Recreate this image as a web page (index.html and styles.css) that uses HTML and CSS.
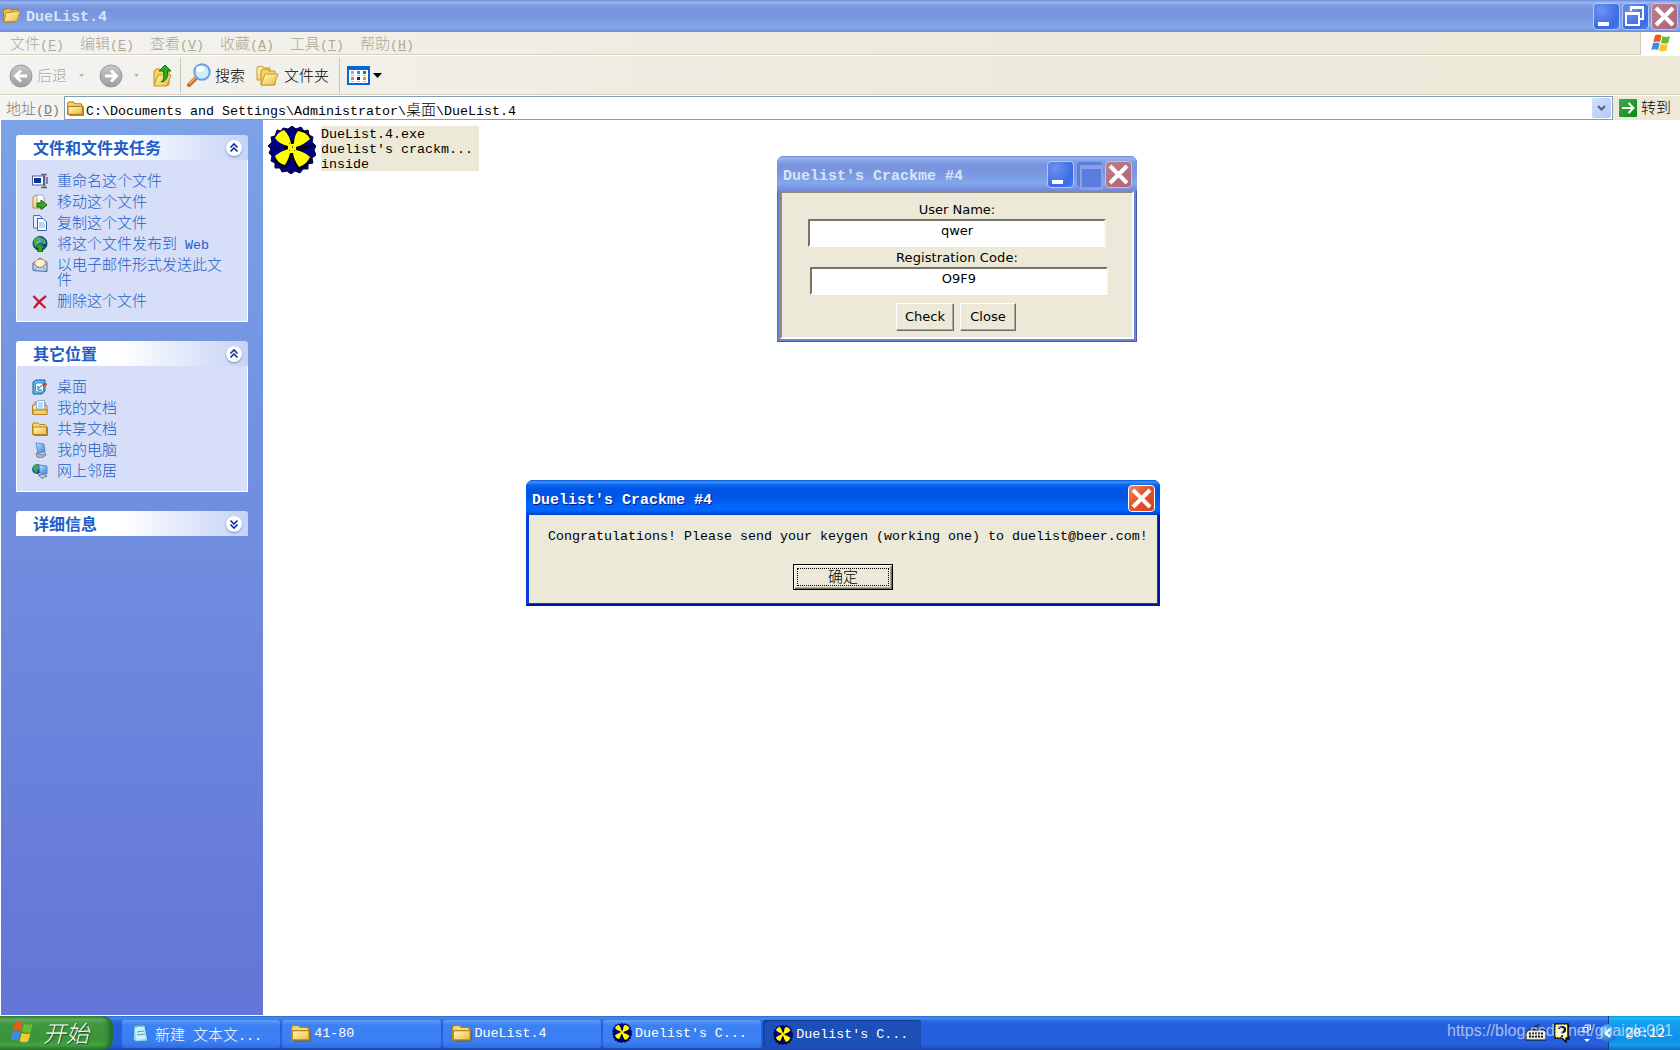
FILE: index.html
```html
<!DOCTYPE html>
<html lang="zh-CN">
<head>
  <meta charset="UTF-8">
  <title>DueList.4</title>
  <link rel="stylesheet" href="styles.css">
</head>
<body>
  <!-- shared icons -->
  <svg class="defs" width="0" height="0">
    <defs>
      <linearGradient id="gold" x1="0" y1="0" x2="1" y2="1"><stop offset="0" stop-color="#fffbc4"/><stop offset="1" stop-color="#eeb93c"/></linearGradient>
      <linearGradient id="grey" x1="0" y1="0" x2="0" y2="1"><stop offset="0" stop-color="#c8c8c8"/><stop offset="1" stop-color="#9c9c9c"/></linearGradient>
      <linearGradient id="screen" x1="0" y1="0" x2="1" y2="1"><stop offset="0" stop-color="#bfe6ff"/><stop offset="1" stop-color="#2b83e0"/></linearGradient>
      <radialGradient id="globe" cx=".35" cy=".3"><stop offset="0" stop-color="#8fd0ff"/><stop offset="1" stop-color="#0a3fa0"/></radialGradient>
      <symbol id="folder" viewBox="0 0 16 16">
        <path d="M.5 13.500V3L1.500 2H6L7.500 3.500H13L14 4.500V13.500Z" fill="#f6d873" stroke="#b5851a"/>
        <path d="M1 13.500V7L2 6H14.500V13.500Z" fill="url(#gold)" stroke="#b5851a"/>
        <path d="M2 14.500H15.500V6" fill="none" stroke="#6a5a30" stroke-opacity=".7"/>
      </symbol>
      <symbol id="fan" viewBox="0 0 48 48">
        <path d="M9 4L13 5L15 2L20 3L24 0L28 3L33 1L36 5L40 4L41 9L45 11L44 16L48 20L46 24L48 29L44 32L45 37L40 38L40 43L35 43L32 47L27 45L23 48L19 45L14 46L12 42L7 42L7 37L3 35L4 30L1 27L3 23L0 20L4 16L3 11L7 10Z" fill="#00007c" stroke="#00003c"/>
        <path d="M16 5L25 16L29 4Q39 3 43 12L31 20H45L31 26L44 33Q40 43 29 43L24 31L18 42Q11 41 6 34L16 25Z" fill="#000" opacity=".85"/>
        <path d="M7 12Q10 6 16 4Q22 10 23 18L26 18Q26 10 30 5Q39 6 42 13Q37 18 28 21V24Q37 26 42 31Q39 38 31 41Q26 34 25 27L22 27Q21 32 17 39Q9 37 7 30Q13 25 20 23L20 20Q11 18 7 12Z" fill="#ff0"/>
        <path d="M21 17h1v1h-1zM25 17h1v1h-1zM21 24h1v1h-1zM26 24h1v1h-1zM24 20h1v2h-1z" fill="#660"/>
      </symbol>
      <symbol id="flag" viewBox="0 0 20 20">
        <path d="M4 2.500Q7.500 .5 10.500 2.500L9 9.300Q6 7.500 2.300 9.300Z" fill="#ea5a24"/>
        <path d="M11.500 3Q15 5 19 3L17.300 10Q13.500 11.500 10 9.800Z" fill="#6cbb30"/>
        <path d="M2 10.300Q5.500 8.500 8.700 10.300L7 17Q4 15.300 .3 17Z" fill="#4289e2"/>
        <path d="M9.700 10.800Q13.500 12.500 17 11L15.300 17.800Q11.500 19.500 8 17.600Z" fill="#f8c82a"/>
      </symbol>
      <symbol id="cross" viewBox="0 0 27 27"><path d="M5 5L22 22M22 5L5 22" stroke="#fff" stroke-width="4"/></symbol>
      <symbol id="up" viewBox="0 0 16 16"><path d="M4.500 7.500L8 4L11.500 7.500M4.500 11.500L8 8L11.500 11.500" fill="none" stroke="#0a3ba4" stroke-width="1.700"/></symbol>
      <symbol id="down" viewBox="0 0 16 16"><path d="M4.500 4.500L8 8L11.500 4.500M4.500 8.500L8 12L11.500 8.500" fill="none" stroke="#0a3ba4" stroke-width="1.700"/></symbol>
    </defs>
  </svg>

  <header class="titlebar inactive main-title">
    <svg class="title-icon" width="20" height="18" viewBox="0 0 20 18"><path d="M2 15L1 3L7 1L9 3L16 2L16 6L14 15Z" fill="#edbd40" stroke="#aa7a18"/><path d="M2 15L4 6L18 4L15 14Z" fill="url(#gold)" stroke="#c59327"/></svg>
    <span class="title-text">DueList.4</span>
    <span class="win-btn min"></span>
    <span class="win-btn"><svg width="27" height="27"><path d="M9 8V4.500H21V16H18" fill="none" stroke="#fff" stroke-width="2"/><rect x="4" y="10" width="13" height="12" fill="none" stroke="#fff" stroke-width="2"/><path d="M3 10.500H18M8 4.500H22" stroke="#fff" stroke-width="3"/></svg></span>
    <span class="win-btn close"><svg width="27" height="27"><use href="#cross"/></svg></span>
  </header>

  <nav class="menubar">
    <span>文件<i>(<u>F</u>)</i></span>
    <span>编辑<i>(<u>E</u>)</i></span>
    <span>查看<i>(<u>V</u>)</i></span>
    <span>收藏<i>(<u>A</u>)</i></span>
    <span>工具<i>(<u>T</u>)</i></span>
    <span>帮助<i>(<u>H</u>)</i></span>
    <div class="brand"><svg width="20" height="20"><use href="#flag"/></svg></div>
  </nav>

  <div class="toolbar">
    <svg width="24" height="24"><circle cx="12" cy="12" r="11" fill="url(#grey)" stroke="#999"/><path d="M18 12H7M12 6.500L6.500 12L12 17.500" fill="none" stroke="#fff" stroke-width="3"/></svg>
    <span class="tool-text disabled">后退</span>
    <svg class="arrow back-arrow" width="5" height="3"><path d="M0 0H5L2.500 3Z" fill="#b7b4a6"/></svg>
    <svg class="forward" width="24" height="24"><circle cx="12" cy="12" r="11" fill="url(#grey)" stroke="#999"/><path d="M6 12H17M12 6.500L17.500 12L12 17.500" fill="none" stroke="#fff" stroke-width="3"/></svg>
    <svg class="arrow forward-arrow" width="5" height="3"><path d="M0 0H5L2.500 3Z" fill="#b7b4a6"/></svg>
    <svg class="up-folder" width="20" height="24"><path d="M1 21V7L3 5H7L9 7H16V21Z" fill="#f3d565" stroke="#c09020"/><path d="M1 22L5 11H18L14 22Z" fill="url(#gold)" stroke="#c59327"/><path d="M8 18Q12 16 10.500 7H6L12 1L18 7H14.500Q16 17 8 18Z" fill="#31aa20" stroke="#14720f"/></svg>
    <div class="sep"></div>
    <svg class="search" width="25" height="25"><path d="M2 22L10 14" stroke="#c86a28" stroke-width="4" stroke-linecap="round"/><path d="M2 21L9 14" stroke="#ffb263" stroke-width="1.500"/><circle cx="15" cy="9" r="7.700" fill="#cdeeff" stroke="#6d9de0" stroke-width="2"/><ellipse cx="13" cy="6" rx="4" ry="3" fill="#fff"/></svg>
    <span class="tool-text search-text">搜索</span>
    <svg class="folders" width="24" height="22"><path d="M1 15V2L6 1L8 3H14V15Z" fill="url(#gold)" stroke="#c99a2a"/><path d="M5 20V6L7 4H11L13 6H19V20Z" fill="#f5d465" stroke="#c49428"/><path d="M5 20L9 9H22L18 20Z" fill="url(#gold)" stroke="#c99a2a"/></svg>
    <span class="tool-text folders-text">文件夹</span>
    <div class="sep views-sep"></div>
    <svg class="views" width="23" height="19"><rect x="1" y="1" width="21" height="17" fill="#fff" stroke="#0765d4" stroke-width="2"/><path d="M0 2H23" stroke="#0765d4" stroke-width="4"/><path d="M4 5h3v3h-3z" fill="#a5a4cf"/><path d="M10 5h3v3h-3z" fill="#2e86e5"/><path d="M16 5h3v3h-3z" fill="#17960d"/><path d="M4 11h3v3h-3z" fill="#f57548"/><path d="M10 11h3v3h-3z" fill="#002f90"/><path d="M16 11h3v3h-3z" fill="#d3a010"/><path d="M4 9.500h3m3 0h3m3 0h3M4 15.500h3m3 0h3m3 0h3" stroke="#b8b8b8"/></svg>
    <svg class="views-arrow" width="9" height="5"><path d="M0 0H9L4.500 5Z"/></svg>
  </div>

  <div class="address">
    <span class="address-label">地址<i>(<u>D</u>)</i></span>
    <div class="address-box">
      <svg width="17" height="17"><use href="#folder"/></svg>
      <span><i>C:\Documents and Settings\Administrator\</i>桌面<i>\DueList.4</i></span>
      <div class="dropdown"><svg width="9" height="6"><path d="M1 1L4.500 4.500L8 1" fill="none" stroke="#4d6185" stroke-width="2"/></svg></div>
    </div>
    <div class="go"><svg width="18" height="18"><path d="M3 9H14M9.500 4L14.500 9L9.500 14" fill="none" stroke="#fff" stroke-width="2"/></svg></div>
    <span class="go-text">转到</span>
  </div>

  <main class="explorer">
    <aside class="sidebar">
      <section class="panel">
        <h2>文件和文件夹任务<span class="toggle"><svg width="16" height="16"><use href="#up"/></svg></span></h2>
        <ul>
          <li><svg width="16" height="16"><rect x=".5" y="3" width="11" height="9" fill="#fff" stroke="#555b85"/><rect x="2" y="5" width="7" height="5" fill="#0732a5"/><path d="M9 1.500H15M12.500 2V14M9 14.500H15M15 4V11" stroke="#5d6580" fill="none" stroke-width="1.500"/></svg><span>重命名这个文件</span></li>
          <li><svg width="16" height="16"><path d="M1 14V3L4 1L6 3H12V14Z" fill="url(#gold)" stroke="#b78a2a"/><path d="M5 1H10L12 3V9H5Z" fill="#fff" stroke="#9bb3cf"/><path d="M5 9H9V6L15 11L9 15.500V13H5Z" fill="#39a72b" stroke="#0d6510"/></svg><span>移动这个文件</span></li>
          <li><svg width="16" height="16"><path d="M1.500 .5H8L10 3V13H1.500Z" fill="#e4f2ff" stroke="#4774af"/><path d="M5.500 3.500H11L14.500 7V15.500H5.500Z" fill="#fff" stroke="#3264a8"/><path d="M7 8H12M7 10H13M7 12H13" stroke="#73aae8"/></svg><span>复制这个文件</span></li>
          <li><svg width="16" height="16"><circle cx="8" cy="7.500" r="7" fill="url(#globe)" stroke="#123c72"/><path d="M2 5Q4 0 7 1L7 5L4 7L6 10L3 11ZM10 2Q14 3 14 8L11 8Z" fill="#48b52c"/><path d="M6 16V12H3L8 7L13 12H10.500V16Z" fill="#32a32a" stroke="#125f12"/></svg><span>将这个文件发布到<i> Web</i></span></li>
          <li><svg width="16" height="16"><path d="M1 6L8 1L15 5V14.500L1 13.500Z" fill="#c2d6f0" stroke="#4c6799"/><path d="M3 4.500Q8 0 13 4V8L8 11L3 8Z" fill="#fff2ca" stroke="#d6a14d"/><path d="M1 7L8 11L15 7M1 14L6 9.500M15 14L10 9.500" fill="none" stroke="#7392c0"/></svg><span>以电子邮件形式发送此文件</span></li>
          <li><svg width="16" height="16"><path d="M1.500 3Q6 8 13.500 15M14 3Q7 8 2 15" fill="none" stroke="#d01334" stroke-width="2.200"/></svg><span>删除这个文件</span></li>
        </ul>
      </section>

      <section class="panel">
        <h2>其它位置<span class="toggle"><svg width="16" height="16"><use href="#up"/></svg></span></h2>
        <ul>
          <li><svg width="16" height="16"><path d="M1 3L4 1H13V12L10 15H1Z" fill="#68b5ef" stroke="#14629f"/><rect x="3.500" y="4" width="8" height="9" rx="2" fill="#fff" stroke="#328bd0"/><path d="M6 7V11H10M7 9L13 4" fill="none" stroke="#164f8b"/><path d="M12 6L15 5" stroke="#dc4d1b" stroke-width="2"/></svg><span>桌面</span></li>
          <li><svg width="16" height="16"><path d="M.5 14V5H3V2H13V5L15 6V14Z" fill="url(#gold)" stroke="#a97a20"/><path d="M4.500 9V2L6 .5H12.500V9Z" fill="#fff" stroke="#89acd0"/><path d="M6 3H11M6 5H11M6 7H11" stroke="#7eb1e1"/><path d="M1 10H15V14.500H1Z" fill="#f5cf69" stroke="#b5852b"/></svg><span>我的文档</span></li>
          <li><svg width="16" height="16"><use href="#folder"/></svg><span>共享文档</span></li>
          <li><svg width="16" height="16"><path d="M4 1L12 2L13 10L6 11Z" fill="url(#screen)" stroke="#678bb9"/><path d="M4 11L11 13L13 11L14 13L10 16L5 15Z" fill="#adb5cb" stroke="#777e9b"/></svg><span>我的电脑</span></li>
          <li><svg width="16" height="16"><circle cx="5" cy="6" r="5" fill="url(#globe)"/><path d="M1 4Q4 0 6 2L4 6L6 9L3 10Z" fill="#36ad27"/><path d="M7 2L15 3V11L8 10Z" fill="url(#screen)" stroke="#648ab5"/><path d="M6 12L12 11L15 13L10 15.500Z" fill="#b8bfd3" stroke="#737b98"/></svg><span>网上邻居</span></li>
        </ul>
      </section>

      <section class="panel">
        <h2>详细信息<span class="toggle"><svg width="16" height="16"><use href="#down"/></svg></span></h2>
      </section>
    </aside>

    <div class="files">
      <div class="file">
        <svg width="48" height="48"><use href="#fan"/></svg>
        <div class="file-text">DueList.4.exe<br>duelist's crackm...<br>inside</div>
      </div>
    </div>
  </main>

  <div class="window crackme">
    <div class="titlebar inactive">
      <span class="title-text">Duelist's Crackme #4</span>
      <span class="win-btn min"></span>
      <span class="win-btn max"></span>
      <span class="win-btn close"><svg width="27" height="27"><use href="#cross"/></svg></span>
    </div>
    <div class="crackme-body">
      <label>User Name:</label>
      <div class="field">qwer</div>
      <label class="code-label">Registration Code:</label>
      <div class="field code">O9F9</div>
      <div class="actions">
        <button class="check">Check</button>
        <button>Close</button>
      </div>
    </div>
  </div>

  <div class="window message">
    <div class="titlebar active">
      <span class="title-text">Duelist's Crackme #4</span>
      <span class="win-btn close"><svg width="27" height="27"><use href="#cross"/></svg></span>
    </div>
    <div class="message-body">
      <p>Congratulations! Please send your keygen (working one) to duelist@beer.com!</p>
      <button class="ok"><span>确定</span></button>
    </div>
  </div>

  <footer class="taskbar">
    <div class="start"><svg width="24" height="24"><use href="#flag"/></svg><span>开始</span></div>
    <div class="tasks">
      <div class="task"><svg width="19" height="19"><path d="M3 1L14 1L17 17L5 18L2 15Z" fill="#8dd4f4" stroke="#347cad"/><path d="M4 3L13 3L15 15L5 16Z" fill="#c9f1ff"/><path d="M5 1V4M8 0V3M11 0V3M6 8L13 7M6 11L14 10" stroke="#5099b9"/></svg><span>新建<i> </i>文本文<i>...</i></span></div>
      <div class="task"><svg width="20" height="20"><use href="#folder"/></svg><i>41-80</i></div>
      <div class="task"><svg width="20" height="20"><use href="#folder"/></svg><i>DueList.4</i></div>
      <div class="task"><svg width="20" height="20"><use href="#fan"/></svg><i>Duelist's C...</i></div>
      <div class="task pressed"><svg width="20" height="20"><use href="#fan"/></svg><i>Duelist's C...</i></div>
    </div>
    <div class="lang">
      <svg width="20" height="18"><path d="M7 5Q7 2 10 2T13 0" fill="none" stroke="#111"/><path d="M2 6H18L20 8V16H0V9Z" fill="#e8e5d8" stroke="#111"/><path d="M3 9.500H17M3 12.500H17" stroke="#111" stroke-width="2" stroke-dasharray="2 1"/></svg>
      <svg class="help" width="18" height="20"><path d="M2 1H15V15H13V19L9 15H2Z" fill="#fffdd0" stroke="#111" stroke-width="1.500"/><path d="M3 2H14V14H3Z" fill="none" stroke="#ff0" stroke-dasharray="2 1"/><path d="M15.500 2V16H14" fill="none" stroke="#111" stroke-width="2"/><path d="M6 6Q6 4 9 4T12 6.500T9 9.500V10.500M9 12V14" fill="none" stroke="#080866" stroke-width="2.200"/></svg>
      <svg class="restore" width="9" height="18"><path d="M3 2.500V1H8.500V5.500H7M1 3.500H6V8H1Z" fill="none" stroke="#fff"/><path d="M2 15H8L5 18Z" fill="#fff"/></svg>
    </div>
    <div class="tray"><span class="tray-toggle"><svg width="18" height="18"><path d="M11 5L7 9L11 13" fill="none" stroke="#fff" stroke-width="2.200"/></svg></span><i>20:12</i></div>
  </footer>
  <div class="watermark">https://blog.csdn.net/guaigle001</div>
</body>
</html>
```

FILE: styles.css
```css
* {
  box-sizing: border-box;
}
body {
  margin: 0;
  width: 1680px;
  height: 1050px;
  overflow: hidden;
  display: flex;
  flex-direction: column;
  background: #fff;
  font-family: "Noto Sans CJK SC", sans-serif;
  font-size: 15px;
  font-weight: 300;
  line-height: 15px;
  white-space: nowrap;
}
svg {
  display: block;
  flex: none;
}
.defs {
  position: absolute;
}
/* latin text keeps an 8px pitch next to 15px hanzi */
i {
  font-family: "Liberation Mono", monospace;
  font-size: 13.33px;
  font-style: normal;
  font-weight: 400;
  line-height: 1px;
  white-space: pre;
}

/* title bars */
.titlebar {
  display: flex;
  align-items: center;
  gap: 2px;
}
.titlebar.inactive {
  background: linear-gradient(#6785d8 0, #9cb8ee 2px, #85a2e5 5px, #7893dd 9px, #7b97e0 18px, #82a8eb 27px, #7d9de5 30px, #7387d8 100%);
  color: #d8e4f8;
}
.titlebar.active {
  background: linear-gradient(#0a57d8 0, #3a91fb 2px, #0868ec 5px, #0055e4 9px, #0056e6 18px, #0065fb 25px, #0067ff 30px, #0041cd 100%);
  color: #fff;
}
.title-text {
  flex: 1;
  padding-top: 2px;
  font-family: "Liberation Mono", monospace;
  font-size: 15px;
  font-weight: 700;
}
.window .title-text {
  padding-top: 6px;
}
.active .title-text {
  text-shadow: 1px 1px #0a1883;
}
.main-title {
  height: 32px;
  flex: none;
  padding: 0 2px;
}
.title-icon {
  margin-right: 2px;
}
.win-btn {
  width: 27px;
  height: 27px;
  border: 1px solid #b4c8f4;
  border-radius: 4px;
  background: radial-gradient(circle at 30% 25%, #6c92ef, #3b6be5 70%, #4a80ef);
  position: relative;
}
.window .win-btn {
  margin-top: 2px;
}
.win-btn svg {
  margin: -1px;
}
.win-btn.close {
  background: linear-gradient(135deg, #bd7d8c, #ae6478);
}
.active .win-btn.close {
  border-color: #fff;
  background: linear-gradient(135deg, #ef8a68, #e2532b 45%, #d8421a);
}
.min::after {
  content: "";
  position: absolute;
  left: 4px;
  bottom: 3px;
  width: 11px;
  height: 4px;
  background: #fff;
}
.win-btn.max {
  background: #5b7de0;
  border-color: #809ce8;
}
.max::after {
  content: "";
  position: absolute;
  left: 3px;
  top: 3px;
  width: 19px;
  height: 19px;
  border: 2px solid #8ba0e8;
  border-top-width: 4px;
}

/* explorer bars */
.menubar, .toolbar, .address {
  display: flex;
  align-items: center;
  flex: none;
  background: linear-gradient(90deg, #f3f3f1, #eeebdf 45%, #ece9d8);
}
.menubar {
  height: 24px;
  gap: 16px;
  padding-left: 10px;
  border-bottom: 1px solid #fff;
  box-shadow: inset 0 -1px #d6d1bd;
  color: #aca899;
}
.menubar span {
  margin-bottom: 3px;
}
.brand {
  width: 40px;
  height: 23px;
  margin-left: auto;
  padding: 1px 0 0 10px;
  background: #fff;
  border-left: 1px solid #d0ccb8;
}
.toolbar {
  height: 40px;
  padding-left: 9px;
  border-bottom: 1px solid #fff;
  box-shadow: inset 0 -1px #d6d1bd;
}
.tool-text {
  margin: 0 0 3px 4px;
}
.disabled {
  color: #aca899;
  text-shadow: 1px 1px #fff;
}
.back-arrow {
  margin-left: 12px;
}
.forward {
  margin-left: 15px;
}
.forward-arrow {
  margin-left: 11px;
}
.up-folder {
  margin-left: 14px;
}
.sep {
  width: 1px;
  height: 35px;
  margin-left: 7px;
  background: #cbc7b2;
}
.search {
  margin-left: 6px;
}
.search-text {
  margin-left: 3px;
}
.folders {
  margin-left: 11px;
}
.views-sep {
  margin-left: 10px;
}
.views {
  margin-left: 7px;
}
.views-arrow {
  margin-left: 3px;
}
.address {
  height: 24px;
  padding-left: 6px;
}
.address-label {
  width: 58px;
  margin-bottom: 2px;
  color: #7d7b70;
}
.address-box {
  width: 1549px;
  height: 24px;
  margin-right: 6px;
  padding: 0 1px 0 2px;
  display: flex;
  align-items: center;
  background: #fff;
  border: 1px solid #7f9db9;
}
.address-box span {
  margin-left: 2px;
}
.dropdown {
  width: 19px;
  height: 20px;
  margin-left: auto;
  display: flex;
  align-items: center;
  justify-content: center;
  background: linear-gradient(135deg, #d5e1fd, #b3c8f8);
  border-radius: 2px;
}
.go {
  width: 18px;
  height: 18px;
  margin-right: 4px;
  border-radius: 1px;
  background: linear-gradient(135deg, #46a954, #068a0c);
}
.go-text {
  margin-bottom: 3px;
}

/* task pane */
.explorer {
  flex: 1;
  display: flex;
  min-height: 0;
  padding-left: 1px;
}
.sidebar {
  width: 262px;
  height: 895px;
  padding: 15px 15px 0;
  display: flex;
  flex-direction: column;
  gap: 19px;
  background: linear-gradient(#7ba2e7, #6375d6);
}
.panel h2 {
  display: flex;
  align-items: center;
  justify-content: space-between;
  height: 25px;
  margin: 0;
  padding: 0 6px 0 17px;
  background: linear-gradient(90deg, #fff 45%, #c6d3f7);
  border-radius: 3px 3px 0 0;
  color: #215dc6;
  font-size: 16px;
  font-weight: 700;
}
.toggle {
  width: 16px;
  height: 16px;
  background: #fff;
  border-radius: 50%;
  box-shadow: 0 1px 2px #7a8cbb;
}
.panel ul {
  display: flex;
  flex-direction: column;
  gap: 6px;
  margin: 0;
  padding: 13px 15px;
  list-style: none;
  background: #d6dff7;
  border: 1px solid #fff;
  border-top: 0;
}
.panel li {
  display: flex;
  gap: 9px;
  color: #215dc6;
}
.panel li svg {
  margin-bottom: -1px;
}
.panel li span {
  width: 168px;
  margin: -1px 0 1px;
  white-space: normal;
  word-break: break-all;
}

.files {
  padding: 6px 5px;
}
.file {
  display: flex;
  gap: 5px;
}
.file-text {
  width: 158px;
  height: 45px;
  padding-top: 1px;
  background: #ece9d8;
  font-family: "Liberation Mono", monospace;
  font-size: 13.33px;
  font-weight: 400;
}

/* floating windows */
.window {
  position: absolute;
  border-radius: 7px 7px 0 0;
  overflow: hidden;
}
.window .titlebar {
  height: 35px;
  padding: 0 5px 0 6px;
}
.crackme {
  left: 777px;
  top: 156px;
  width: 360px;
  height: 186px;
  background: #6d83d9;
  box-shadow: inset 0 -1px #4c52b4, inset -1px 0 #4c52b4, inset 1px 0 #5d66c4;
}
.crackme-body {
  height: 148px;
  margin: 0 3px;
  padding: 9px 0 0 26px;
  display: flex;
  flex-direction: column;
  background: #ece9d8;
  border: 2px solid;
  border-color: #8f8c7e #fff #fff #8f8c7e;
  font-family: "DejaVu Sans", sans-serif;
  font-size: 13px;
  font-weight: 400;
}
.crackme-body label {
  width: 298px;
  height: 17px;
  text-align: center;
}
.crackme-body .code-label {
  letter-spacing: .1px;
}
.field {
  width: 298px;
  height: 28px;
  margin-bottom: 3px;
  padding-top: 2px;
  background: #fff;
  border: 2px solid;
  border-color: #77746a #f8f6ee #fff #77746a;
  text-align: center;
}
.field.code {
  margin-left: 2px;
  margin-bottom: 8px;
}
.actions {
  display: flex;
  gap: 6px;
  margin-left: 88px;
}
.actions button {
  width: 56px;
  height: 28px;
  padding: 0 0 2px;
  background: #ece9d8;
  border: 1px solid;
  border-color: #fff #716f64 #716f64 #fff;
  box-shadow: inset -1px -1px #aca899;
  font: 13px "DejaVu Sans", sans-serif;
}
.actions .check {
  width: 58px;
}
.message {
  left: 526px;
  top: 480px;
  width: 634px;
  height: 126px;
  background: #0c3bdc;
  box-shadow: inset 0 -2px #00189c, inset -2px 0 #00189c;
}
.message-body {
  height: 88px;
  margin: 0 3px;
  padding: 14px 0 0;
  display: flex;
  flex-direction: column;
  align-items: center;
  background: #ece9d8;
}
.message-body p {
  width: 100%;
  margin: 0 0 20px;
  padding-left: 19px;
  font-family: "Liberation Mono", monospace;
  font-size: 13.33px;
  font-weight: 400;
}
.ok {
  width: 100px;
  height: 26px;
  padding: 3px;
  background: #ece9d8;
  border: 1px solid #000;
  box-shadow: inset 1px 1px #fff, inset -1px -1px #716f64, inset -2px -2px #aca899;
  font: 300 15px/14px "Noto Sans CJK SC", sans-serif;
}
.ok span {
  display: block;
  height: 18px;
  border: 1px dotted #000;
}

/* taskbar */
.taskbar {
  height: 34px;
  flex: none;
  display: flex;
  background: linear-gradient(#2a68d0 0, #4290ef 2px, #2c6be5 5px, #245edb 9px, #2561df 27px, #2258cc 31px, #1941a5 100%);
  color: #fff;
}
.start {
  width: 113px;
  padding: 0 0 2px 10px;
  display: flex;
  align-items: center;
  gap: 9px;
  border-radius: 0 10px 10px 0;
  background: linear-gradient(#3b853b 0, #67af66 3px, #3f983f 8px, #3a9339 24px, #44a644 29px, #2c762c 100%);
  box-shadow: inset -4px 0 5px #22692a;
  font-size: 23px;
  font-style: italic;
  text-shadow: 1px 1px 1px #1c4d1c;
}
.tasks {
  display: flex;
  gap: 2px;
  margin: 4px 0 0 9px;
}
.task {
  width: 158.300px;
  height: 28px;
  padding: 0 0 2px 9px;
  display: flex;
  align-items: center;
  gap: 3px;
  border-radius: 3px;
  background: linear-gradient(#62a0fa, #3d82f4 5px, #397ff2 22px, #2f6ddd);
}
.task:first-child {
  gap: 5px;
}
.task.pressed {
  padding: 1px 0 0 10px;
  background: #1c50b6;
  box-shadow: inset 1px 1px 2px #12378a;
}
.lang {
  display: flex;
  align-items: center;
  margin-left: auto;
}
.help {
  margin-left: 7px;
}
.restore {
  margin: 0 17px 0 11px;
}
.tray {
  width: 72px;
  display: flex;
  align-items: center;
  background: linear-gradient(#1290e0 0, #19bbf6 2px, #139ff0 6px, #1191e8 24px, #12a0ee 29px, #0e6dbb 100%);
  border-left: 1px solid #103e8c;
}
.tray-toggle {
  width: 18px;
  height: 18px;
  margin: 0 8px 0 -10px;
  border-radius: 50%;
  background: radial-gradient(circle at 35% 35%, #69c2fb, #1771d8 75%);
}
.watermark {
  position: absolute;
  left: 1447px;
  top: 1022px;
  color: rgba(255, 255, 255, .6);
  font: 16px/18px "Liberation Sans", sans-serif;
}
```
